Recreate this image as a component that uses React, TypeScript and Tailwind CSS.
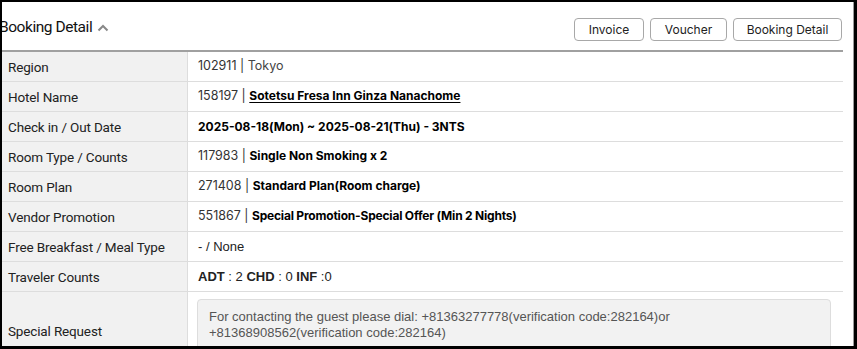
import React from "react";

const inter = { fontFamily: "Inter, 'Liberation Sans', sans-serif" };
const roboto = { fontFamily: "Roboto, Inter, sans-serif" };
const arial = { fontFamily: "'Liberation Sans', Arial, sans-serif" };

function Row({ label, children, tall }: { label: string; children: React.ReactNode; tall?: boolean }) {
  return (
    <div className={`flex border-b border-[#dddddd] ${tall ? "h-[78px]" : "h-[30px]"}`}>
      <div
        className="w-[186px] shrink-0 bg-[#f1f1f1] border-r border-[#dddddd] flex items-center pl-[6px] pt-[1px] text-[13.5px] tracking-[-0.15px] text-[#222]"
        style={roboto}
      >
        {label}
      </div>
      <div className="flex-1 flex items-center pl-[10px] text-[12.5px] text-[#333]">{children}</div>
    </div>
  );
}

export default function App() {
  return (
    <div className="w-[857px] h-[349px] bg-black pl-[2px] pt-[2px] pr-[3px] pb-[3px] overflow-hidden" style={inter}>
      <div className="w-full h-full bg-white overflow-hidden border-r border-[#9a9a9a]">
        <div className="w-[841px]">
          <div className="h-[50px] flex items-center justify-between border-b-2 border-[#a0a0a0]">
            <div className="flex items-center -ml-[3px] text-[15.5px] tracking-[-0.45px] text-[#111] pt-[4px]" style={roboto}>
              <span>Booking Detail</span>
              <svg width="12" height="8" viewBox="0 0 12 8" className="ml-[5px]">
                <path d="M1.5 6.5 L6 2 L10.5 6.5" fill="none" stroke="#888" strokeWidth="2" />
              </svg>
            </div>
            <div className="flex gap-[6px] pt-[7px]">
              <button className="h-[23px] w-[70px] border border-[#a8a8a8] rounded-[4px] text-[12px] text-[#222] bg-white">Invoice</button>
              <button className="h-[23px] w-[77px] border border-[#a8a8a8] rounded-[4px] text-[12px] text-[#222] bg-white">Voucher</button>
              <button className="h-[23px] w-[109px] border border-[#a8a8a8] rounded-[4px] text-[12px] text-[#222] bg-white mr-[1px]">Booking Detail</button>
            </div>
          </div>
          <Row label="Region">
            <span>102911 | <span className="text-[#444]">Tokyo</span></span>
          </Row>
          <Row label="Hotel Name">
            <span>
              158197 | <span className="text-[12px] font-bold text-black underline underline-offset-2">Sotetsu Fresa Inn Ginza Nanachome</span>
            </span>
          </Row>
          <Row label="Check in / Out Date">
            <span className="text-[12px] font-bold text-black">2025-08-18(Mon) ~ 2025-08-21(Thu) - 3NTS</span>
          </Row>
          <Row label="Room Type / Counts">
            <span>
              117983 | <span className="text-[12px] font-bold text-black">Single Non Smoking x 2</span>
            </span>
          </Row>
          <Row label="Room Plan">
            <span>
              271408 | <span className="text-[12px] font-bold text-black">Standard Plan(Room charge)</span>
            </span>
          </Row>
          <Row label="Vendor Promotion">
            <span>
              551867 | <span className="text-[12px] font-bold text-black tracking-[-0.2px]">Special Promotion-Special Offer (Min 2 Nights)</span>
            </span>
          </Row>
          <Row label="Free Breakfast / Meal Type">
            <span className="text-[13px] text-[#222]" style={arial}>- / None</span>
          </Row>
          <Row label="Traveler Counts">
            <span className="text-[13px] text-[#222]" style={arial}>
              <b>ADT</b> : 2 <b>CHD</b> : 0 <b>INF</b> :0
            </span>
          </Row>
          <Row label="Special Request" tall>
            <div
              className="w-[634px] h-[64px] -ml-[1px] bg-[#f2f2f2] border border-[#dddddd] rounded-[4px] px-[11px] pt-[9px] text-[13px] leading-[16px] text-[#555]"
              style={arial}
            >
              For contacting the guest please dial: +81363277778(verification code:282164)or +81368908562(verification code:282164)
            </div>
          </Row>
        </div>
      </div>
    </div>
  );
}
